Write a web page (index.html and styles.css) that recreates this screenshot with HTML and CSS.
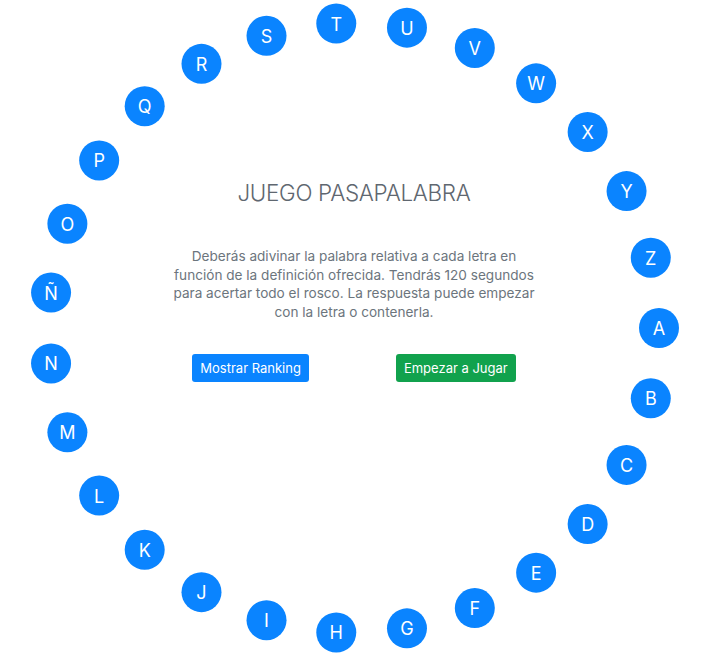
FILE: index.html
```html
<!DOCTYPE html>
<html lang="es">
<head>
<meta charset="utf-8">
<title>Juego Pasapalabra</title>
<link rel="stylesheet" href="styles.css">
</head>
<body>
<div class="stage">
  <div class="ring">
    <div class="letter" style="--a:0deg">A</div>
    <div class="letter" style="--a:13.333deg">B</div>
    <div class="letter" style="--a:26.667deg">C</div>
    <div class="letter" style="--a:40deg">D</div>
    <div class="letter" style="--a:53.333deg">E</div>
    <div class="letter" style="--a:66.667deg">F</div>
    <div class="letter" style="--a:80deg">G</div>
    <div class="letter" style="--a:93.333deg">H</div>
    <div class="letter" style="--a:106.667deg">I</div>
    <div class="letter" style="--a:120deg">J</div>
    <div class="letter" style="--a:133.333deg">K</div>
    <div class="letter" style="--a:146.667deg">L</div>
    <div class="letter" style="--a:160deg">M</div>
    <div class="letter" style="--a:173.333deg">N</div>
    <div class="letter" style="--a:186.667deg">Ñ</div>
    <div class="letter" style="--a:200deg">O</div>
    <div class="letter" style="--a:213.333deg">P</div>
    <div class="letter" style="--a:226.667deg">Q</div>
    <div class="letter" style="--a:240deg">R</div>
    <div class="letter" style="--a:253.333deg">S</div>
    <div class="letter" style="--a:266.667deg">T</div>
    <div class="letter" style="--a:280deg">U</div>
    <div class="letter" style="--a:293.333deg">V</div>
    <div class="letter" style="--a:306.667deg">W</div>
    <div class="letter" style="--a:320deg">X</div>
    <div class="letter" style="--a:333.333deg">Y</div>
    <div class="letter" style="--a:346.667deg">Z</div>
  </div>
  <div class="content">
    <h1 class="title">JUEGO PASAPALABRA</h1>
    <p class="intro">Deberás adivinar la palabra relativa a cada letra en función de la definición ofrecida. Tendrás 120 segundos para acertar todo el rosco. La respuesta puede empezar con la letra o contenerla.</p>
    <div class="actions">
      <button class="btn btn-primary">Mostrar Ranking</button>
      <button class="btn btn-success">Empezar a Jugar</button>
    </div>
  </div>
</div>
</body>
</html>
```

FILE: styles.css
```css
* { box-sizing: border-box; }
html, body { margin: 0; padding: 0; background: #fff; }
body { font-family: Inter, "Noto Sans", "Liberation Sans", sans-serif; }

.stage {
  position: relative;
  width: 713px;
  height: 661px;
  overflow: hidden;
}

.ring {
  position: absolute;
  left: 354px;
  top: 328px;
  width: 0;
  height: 0;
}

.letter {
  position: absolute;
  left: -20px;
  top: -20px;
  width: 40px;
  height: 40px;
  border-radius: 50%;
  background: #0a84ff;
  color: #fff;
  font-size: 18px;
  display: flex;
  align-items: center;
  justify-content: center;
  transform: rotate(var(--a)) translate(305px) rotate(calc(-1 * var(--a)));
}

.content {
  display: flex;
  flex-direction: column;
  align-items: center;
  padding: 177px 5px 0 0;
}

.title {
  margin: 0;
  font-size: 22.4px;
  font-weight: 300;
  color: #5f6770;
  line-height: 32px;
  letter-spacing: -0.3px;
}

.intro {
  margin: 38px 0 0;
  width: 368px;
  text-align: center;
  font-size: 13.6px;
  line-height: 18.5px;
  color: #6c757d;
}

.actions {
  display: flex;
  gap: 87px;
  margin-top: 33px;
}

.btn {
  font-family: inherit;
  font-size: 13px;
  color: #fff;
  border: 0;
  border-radius: 3px;
  height: 28px;
  padding: 0 8px;
  line-height: 28px;
  white-space: nowrap;
}

.btn-primary { background: #0a84ff; }
.btn-success { background: #11a24d; }
```
